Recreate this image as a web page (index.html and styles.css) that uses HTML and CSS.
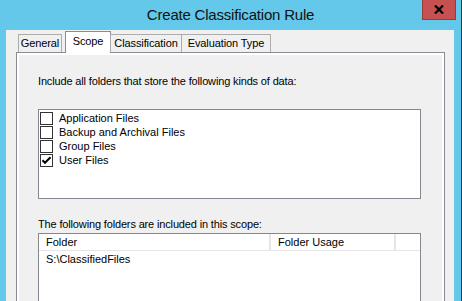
FILE: index.html
```html
<!DOCTYPE html>
<html lang="en">
<head>
    <meta charset="UTF-8">
    <title>Create Classification Rule</title>
    <link rel="stylesheet" href="styles.css">
</head>
<body>
    <div class="window">
        <!-- Title bar -->
        <div class="titlebar">
            <span></span>
            <span class="title">Create Classification Rule</span>
            <button class="close-btn" title="Close">
                <svg width="10" height="9" viewBox="0 0 10 9">
                    <path d="M1 0.5 L9 8.5 M9 0.5 L1 8.5" stroke="#000" stroke-width="2.2" fill="none"/>
                </svg>
            </button>
        </div>

        <div class="client">
            <!-- Tabs -->
            <div class="tabs">
                <div class="tab tab-general">General</div>
                <div class="tab tab-scope selected">Scope</div>
                <div class="tab tab-class">Classification</div>
                <div class="tab tab-eval">Evaluation Type</div>
            </div>

            <div class="panel">
                <div class="page">
                    <p class="label">Include all folders that store the following kinds of data:</p>

                    <div class="checklist">
                        <div class="check-row">
                            <span class="checkbox"></span>
                            <span>Application Files</span>
                        </div>
                        <div class="check-row">
                            <span class="checkbox"></span>
                            <span>Backup and Archival Files</span>
                        </div>
                        <div class="check-row">
                            <span class="checkbox"></span>
                            <span>Group Files</span>
                        </div>
                        <div class="check-row">
                            <span class="checkbox">
                                <svg width="11" height="11" viewBox="0 0 11 11">
                                    <path d="M1.5 5.2 L4 7.8 L9.5 2.3" stroke="#000" stroke-width="2" fill="none"/>
                                </svg>
                            </span>
                            <span>User Files</span>
                        </div>
                    </div>

                    <p class="label second">The following folders are included in this scope:</p>

                    <div class="listview">
                        <div class="list-header">
                            <div class="col col-folder">Folder</div>
                            <div class="col col-usage">Folder Usage</div>
                            <div class="col col-rest"></div>
                        </div>
                        <div class="list-row">S:\ClassifiedFiles</div>
                    </div>
                </div>
            </div>
        </div>
    </div>
</body>
</html>
```

FILE: styles.css
```css
html, body {
    margin: 0;
    padding: 0;
}

body {
    width: 462px;
    height: 301px;
    overflow: hidden;
    background-color: #63c8e9;
    font-family: "Liberation Sans", Arial, sans-serif;
    font-size: 11px;
    color: #000;
}

.window {
    width: 461px;
    height: 301px;
    border-right: 1px solid #1f3b47;
    display: flex;
    flex-direction: column;
}

.titlebar {
    height: 30px;
    display: grid;
    grid-template-columns: 1fr auto 1fr;
    align-items: start;
}

.title {
    font-size: 15px;
    line-height: 29px;
    color: #111;
    letter-spacing: -0.2px;
}

.close-btn {
    justify-self: end;
    width: 34px;
    height: 20px;
    margin-right: 5px;
    padding: 0;
    border: 1px solid #9c3a3a;
    border-top: none;
    background-color: #c75050;
    display: flex;
    align-items: center;
    justify-content: center;
}

.client {
    flex: 1;
    min-height: 0;
    overflow: hidden;
    margin-left: 6px;
    margin-right: 7px;
    background-color: #f0f0f0;
    padding: 2px 9px 0 10px;
}

/* Tabs */
.tabs {
    display: flex;
    align-items: flex-end;
    padding-left: 2px;
    height: 20px;
    position: relative;
    z-index: 1;
}

.tab {
    height: 17px;
    line-height: 17px;
    border: 1px solid #acacac;
    border-bottom: none;
    background-color: #f0f0f0;
    text-align: center;
    letter-spacing: -0.1px;
}

.tab-general {
    width: 42px;
    margin-right: 3px;
}

.tab-scope {
    width: 44px;
}

.tab-class {
    width: 70px;
    margin-left: -1px;
}

.tab-eval {
    width: 88px;
    margin-left: -1px;
}

.tab.selected {
    height: 21px;
    margin-bottom: -1px;
    background-color: #fff;
    border-color: #898c95;
    line-height: 18px;
}

.panel {
    border: 1px solid #898c95;
    padding: 2px;
    background-color: #fff;
    height: 260px;
}

.page {
    background-color: #f0f0f0;
    height: 100%;
    padding: 19px 21px 0 19px;
}

.label {
    margin: 0;
    line-height: 14px;
    letter-spacing: -0.15px;
}

.label.second {
    margin-top: 18px;
    margin-bottom: 2px;
}

.checklist {
    margin-top: 21px;
    height: 87px;
    border: 1px solid #828790;
    background-color: #fff;
    padding-top: 1px;
}

.check-row {
    display: flex;
    align-items: center;
    height: 14px;
    padding-left: 1px;
}

.checkbox {
    width: 11px;
    height: 11px;
    border: 1px solid #333;
    background-color: #fff;
    margin-right: 6px;
    display: flex;
}

.listview {
    border: 1px solid #828790;
    background-color: #fff;
    height: 100px;
}

.list-header {
    display: flex;
    height: 16px;
    border-bottom: 1px solid #e5e5e5;
}

.col {
    line-height: 16px;
    padding-left: 7px;
    border-right: 2px solid #e5e5e5;
}

.col-folder {
    width: 223px;
}

.col-usage {
    width: 116px;
}

.col-rest {
    flex: 1;
    border-right: none;
}

.list-row {
    height: 17px;
    line-height: 17px;
    padding-left: 7px;
}
```
